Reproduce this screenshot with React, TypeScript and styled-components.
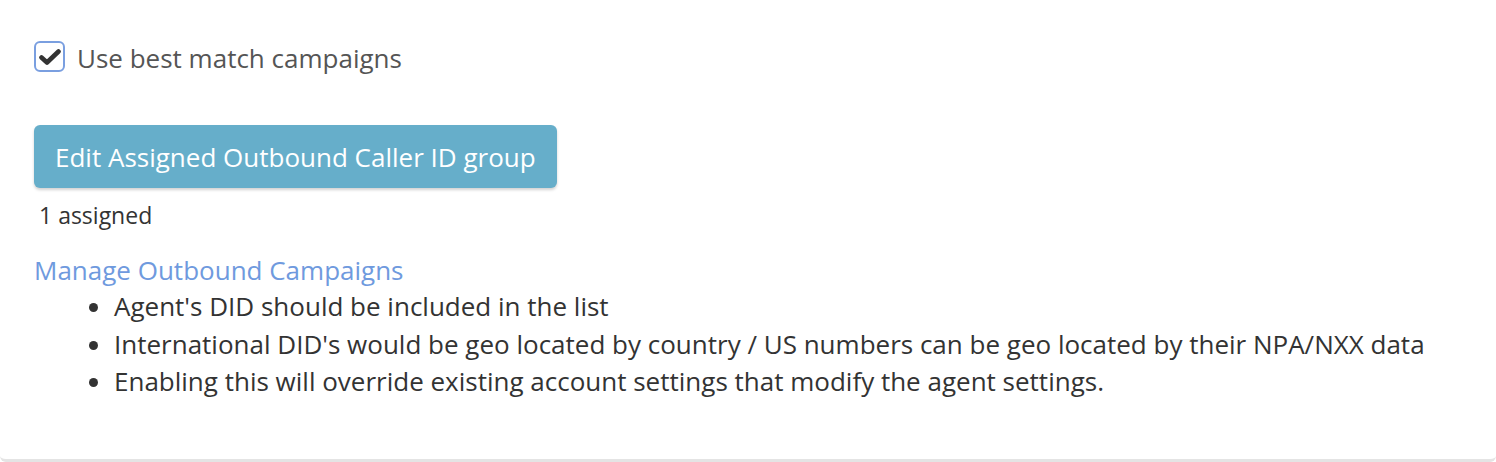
import React, { useState } from 'react'
import styled, { createGlobalStyle } from 'styled-components'

const GlobalStyle = createGlobalStyle`
  html, body {
    margin: 0;
    padding: 0;
    background: #ffffff;
  }
  body {
    font-family: 'Open Sans', 'Noto Sans', sans-serif;
    color: #333333;
  }
`

const Panel = styled.div`
  box-sizing: border-box;
  width: 1496px;
  height: 462px;
  padding: 41px 34px 0;
  background: #ffffff;
  border-bottom: 3px solid #e4e4e4;
  border-radius: 0 0 6px 6px;
  display: flex;
  flex-direction: column;
`

const CheckRow = styled.label`
  display: flex;
  align-items: center;
  gap: 12px;
  height: 31px;
  cursor: pointer;
  font-size: 26px;
  line-height: 31px;
  color: #555555;
`

const LabelText = styled.span`
  padding-top: 4px;
`

const Box = styled.span<{ $checked: boolean }>`
  box-sizing: border-box;
  flex: none;
  width: 31px;
  height: 31px;
  border: 2px solid #7a9fe0;
  border-radius: 6px;
  background: #ffffff;
  display: flex;
  align-items: center;
  justify-content: center;
  svg {
    visibility: ${(p) => (p.$checked ? 'visible' : 'hidden')};
  }
`

const EditButton = styled.button`
  margin-top: 53px;
  align-self: flex-start;
  height: 63px;
  padding: 0 21px;
  border: none;
  border-radius: 6px;
  background: #66aeca;
  color: #ffffff;
  font-family: inherit;
  font-size: 26px;
  box-shadow: 0 2px 3px rgba(0, 0, 0, 0.18);
  cursor: pointer;
`

const Assigned = styled.div`
  margin-top: 11px;
  padding-left: 5px;
  font-size: 23px;
  line-height: 32px;
  color: #333333;
`

const ManageLink = styled.a`
  margin-top: 20px;
  align-self: flex-start;
  font-size: 26px;
  line-height: 38px;
  color: #6f9ade;
  text-decoration: none;
`

const Notes = styled.ul`
  margin: -2px 0 0;
  padding-left: 80px;
  font-size: 26px;
  line-height: 38px;
  color: #333333;
  li {
    margin-bottom: -0.5px;
  }
`

export default function App() {
  const [checked, setChecked] = useState(true)

  return (
    <>
      <GlobalStyle />
      <Panel>
        <CheckRow onClick={() => setChecked(!checked)}>
          <Box $checked={checked}>
            <svg width="22" height="18" viewBox="0 0 22 18">
              <path
                d="M2.5 9.5 L8 14.5 L19.5 3.5"
                fill="none"
                stroke="#333"
                strokeWidth="4.6"
                strokeLinecap="round"
                strokeLinejoin="round"
              />
            </svg>
          </Box>
          <LabelText>Use best match campaigns</LabelText>
        </CheckRow>
        <EditButton>Edit Assigned Outbound Caller ID group</EditButton>
        <Assigned>1 assigned</Assigned>
        <ManageLink href="#">Manage Outbound Campaigns</ManageLink>
        <Notes>
          <li>Agent's DID should be included in the list</li>
          <li>
            International DID's would be geo located by country / US numbers can be geo located by
            their NPA/NXX data
          </li>
          <li>Enabling this will override existing account settings that modify the agent settings.</li>
        </Notes>
      </Panel>
    </>
  )
}
